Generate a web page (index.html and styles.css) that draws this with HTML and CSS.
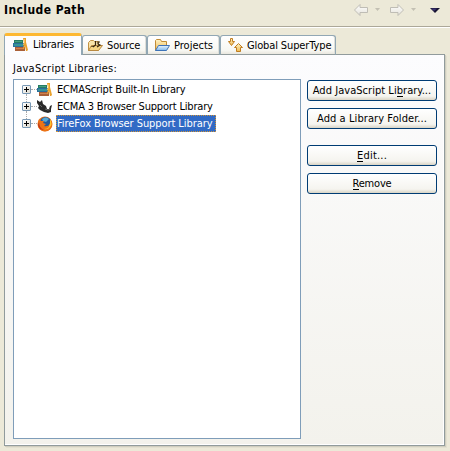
FILE: index.html
```html
<!DOCTYPE html>
<html lang="en">
<head>
<meta charset="utf-8">
<title>Include Path</title>
<link rel="stylesheet" href="styles.css">
</head>
<body>
<svg class="defs" aria-hidden="true">
  <defs>
    <symbol id="books" viewBox="0 0 16 16">
      <path d="M1 3h9v3H1z" fill="#247d63"/><path d="M2 4h7v1H2z" fill="#4aa084"/>
      <path d="M0 6h11v4H0z" fill="#2b6e9b"/><path d="M1 7h9v2H1z" fill="#369498"/>
      <path d="M2 10h10v4H2z" fill="#aa6037"/><path d="M3 11h8v1H3z" fill="#cf8150"/>
      <path d="M10 1h3v4l2 8-1 1h-1l-1-5-1 3h-1l1-6z" fill="#e9a12d"/><path d="M11.500 2v3l-1 3" fill="none" stroke="#f6c65b"/>
    </symbol>
    <linearGradient id="fade" x2="0" y2="1"><stop stop-color="#fff"/><stop offset="1" stop-color="#e4e2da"/></linearGradient>
    <linearGradient id="gold" x2="0" y2="1"><stop stop-color="#fff3c5"/><stop offset="1" stop-color="#edb951"/></linearGradient>
    <linearGradient id="blue" x2="0" y2="1"><stop stop-color="#e7f5ff"/><stop offset="1" stop-color="#7fb8ed"/></linearGradient>
  </defs>
</svg>
<main class="view">
  <header class="header">
    <h1>Include Path</h1>
    <div class="nav">
      <svg class="arrow" viewBox="0 0 14 12"><path d="M.5 6 6 .5v3h7.500v5H6v3z" fill="url(#fade)" stroke="#bfbdb5"/></svg>
      <svg class="small" viewBox="0 0 5 3"><path d="M0 0h5L2.500 3z" fill="#c3c0b3"/></svg>
      <svg class="arrow next" viewBox="0 0 14 12"><path d="M13.500 6 8 .5v3H.5v5H8v3z" fill="url(#fade)" stroke="#bfbdb5"/></svg>
      <svg class="small" viewBox="0 0 5 3"><path d="M0 0h5L2.500 3z" fill="#c3c0b3"/></svg>
      <svg class="menu" viewBox="0 0 10 5"><path d="M0 0h10L5 5z" fill="#171432"/><path d="M1 .5h6L4 3z" fill="#3c3374"/></svg>
    </div>
  </header>
  <nav class="tabs">
    <div class="tab active"><svg class="icon"><use href="#books"/></svg><span class="t-lib">Libraries</span></div>
    <div class="tab source">
      <svg class="icon" viewBox="0 0 16 16"><path d="M1.500 13.500v-8l2-2h3l1 1h4v9z" fill="#f9e4aa" stroke="#c29245"/><path d="m1.500 13.500 3-5h11l-4 5z" fill="#f6d584" stroke="#b98940"/><path d="M8.500 4v4L6 10M13 5h-2v2l2 1-3 2M5 9v1" fill="none" stroke="#34250f" stroke-width="1.2"/></svg>
      <span class="t-source">Source</span></div>
    <div class="tab projects">
      <svg class="icon" viewBox="0 0 16 16"><path d="M1.500 13.500v-10l1-1h4l1 2h5v4" fill="url(#gold)" stroke="#c18c35"/><path d="m1.500 13.500 3-5h11l-3 5z" fill="url(#blue)" stroke="#3c73b9"/></svg>
      <span class="t-projects">Projects</span></div>
    <div class="tab global">
      <svg class="icon" viewBox="0 0 16 16"><path d="M3.500 1.500h2v3h2L4.500 8.500l-3-4h2z" fill="url(#gold)" stroke="#c07d20"/><path d="M9.500 14.500v-4h-2l4-4 4 4h-2v4z" fill="url(#gold)" stroke="#c07d20"/></svg>
      <span class="t-global">Global SuperType</span></div>
  </nav>
  <section class="panel">
    <div class="content">
      <div class="caption"><span class="t-caption">JavaScript Libraries:</span></div>
      <div class="tree">
        <div class="row"><i class="plus"></i><svg class="icon"><use href="#books"/></svg><span class="name t-ecma">ECMAScript Built-In Library</span></div>
        <div class="row"><i class="plus"></i>
          <svg class="icon" viewBox="0 0 16 16"><path d="m0 1 3 2 2-2 1 4 3 2 1 3 2 0 1-3 2-1-1 4v3l-3 1-4-1-4-2-2-2 1-2-2-3z" fill="#292929"/><path d="m3 6 2 2M8 10l3 1 2-1" stroke="#666" fill="none"/></svg>
          <span class="name t-browser">ECMA 3 Browser Support Library</span></div>
        <div class="row last"><i class="plus"></i>
          <svg class="icon" viewBox="0 0 16 16"><circle cx="8" cy="8" r="7.500" fill="#e86d13"/><circle cx="8.500" cy="6.500" r="5.500" fill="#235b9b"/><path d="M5 3q4-3 7 0L9 6 6 5z" fill="#57a9d5"/><path d="M2 3 4 5l3 0-1 2 3 1-2 2q4 1 6-2l0-4q3 4 1 8-3 4-8 3-6-2-5-8z" fill="#ec7316"/><path d="M13 3q3 5 0 8-2 3-6 2 7 0 6-10" fill="#ffc22c"/><path d="M2 6q0 6 5 8-5 0-6-5z" fill="#bf351b"/></svg>
          <span class="name selected t-firefox">FireFox Browser Support Library</span></div>
      </div>
    </div>
    <div class="actions">
      <button><span class="t-add">Add JavaScript Li<u>b</u>rary...</span></button>
      <button><span class="t-folder">Add a Library Folder...</span></button>
      <button class="gap"><span class="t-edit"><u>E</u>dit...</span></button>
      <button><span class="t-remove"><u>R</u>emove</span></button>
    </div>
  </section>
</main>
</body>
</html>
```
FILE: styles.css
```css
* { box-sizing: border-box; }
body { margin: 0; background: #ece9d8; color: #000; font: 11px/14px "DejaVu Sans Condensed", "DejaVu Sans", sans-serif; font-stretch: condensed; }
.defs { position: absolute; width: 0; height: 0; }
.view { width: 450px; height: 451px; overflow: hidden; }
.header { display: flex; height: 28px; justify-content: space-between; border-bottom: 1px solid #fff; box-shadow: inset 0 -1px #aca899; }
h1 { margin: 3px 0 0 4px; font: bold 12px/15px "DejaVu Sans Condensed", "DejaVu Sans", sans-serif; font-stretch: condensed; letter-spacing: .42px; white-space: nowrap; }
.nav { display: flex; align-items: flex-start; padding: 4px 10px 0 0; }
.nav svg { display: block; }
.arrow { width: 14px; height: 12px; }
.small { width: 5px; height: 3px; margin: 4px 0 0 7px; }
.next { margin-left: 10px; }
.menu { width: 10px; height: 5px; margin: 4px 0 0 14px; }
.tabs { display: flex; align-items: flex-end; height: 27px; padding-left: 4px; position: relative; z-index: 1; }
.tab { display: flex; height: 20px; align-items: center; padding-left: 4px; border: 1px solid #91a7b4; border-bottom: 1px solid #919b9c; border-radius: 3px 3px 0 0; background: linear-gradient(#fff, #f7f7f2 80%, #e9e7df); box-shadow: inset -1px 0 #dedfd9; white-space: nowrap; }
.tab span { margin-left: 4px; padding-top: 2px; }
.icon { width: 16px; height: 16px; display: block; flex: none; }
.tab.active { width: 78px; height: 22px; border-top: 3px solid #fdb832; border-bottom: 0; padding: 0 0 2px 8px; background: #fcfcfe; box-shadow: none; }
.tab.active span { padding-top: 0; }
.source { width: 65px; }
.projects { width: 73px; padding-left: 6px; }
.global { width: 116px; padding-left: 6px; }
.panel { width: 441px; height: 392px; margin: -1px 0 0 4px; border: 1px solid #919b9c; display: flex; padding-left: 8px; background: linear-gradient(#fcfcfe, #f3f2ec); box-shadow: 1px 1px #d0cebf, 2px 2px #e3e0d0, inset -1px -1px #fff; }
.content { width: 288px; }
.caption { height: 24px; padding-top: 7px; white-space: nowrap; }
.tree { height: 360px; border: 1px solid #7f9db9; background: #fff; padding: 1px 0 0 8px; }
.row { display: flex; height: 17px; align-items: center; white-space: nowrap; position: relative; }
.row::before, .row::after { content: ""; position: absolute; }
.row::before { left: 9px; top: 8px; width: 6px; border-top: 1px dotted #aaa; }
.row::after { left: 4px; top: 13px; height: 8px; border-left: 1px dotted #aaa; }
.last::after { display: none; }
.plus { width: 9px; height: 9px; margin-right: 6px; border: 1px solid #7898b5; border-radius: 1px; background: linear-gradient(#000, #000) center / 5px 1px no-repeat, linear-gradient(#000, #000) center / 1px 5px no-repeat, linear-gradient(135deg, #fff, #dedbd0); }
.name { height: 17px; line-height: 16px; padding: 1px 0 0 1px; margin-left: 3px; }
.selected { width: 160px; background: #316ac5; color: #fff; outline: 1px dotted #d19539; outline-offset: -1px; }
.actions { width: 130px; margin: 25px 0 0 6px; display: flex; flex-direction: column; gap: 7px; }
button { width: 130px; height: 21px; margin: 0; padding: 1px 0 0; font: inherit; color: #000; border: 1px solid #003c74; border-radius: 3px; background: linear-gradient(#fff, #f5f4ef 80%, #d9d4c5); white-space: nowrap; }
button.gap { margin-top: 9px; }
u { text-decoration: none; box-shadow: inset 0 -1px #000; }
.t-lib { letter-spacing: -.2px; }
.t-source, .t-global { letter-spacing: -.12px; }
.t-caption { letter-spacing: .25px; }
.t-ecma, .t-browser { letter-spacing: -.18px; }
.t-firefox { letter-spacing: -.07px; }
.t-add { letter-spacing: .04px; }
.t-folder { letter-spacing: .08px; }
.t-edit { letter-spacing: .2px; }
.t-remove { letter-spacing: -.2px; }
```
